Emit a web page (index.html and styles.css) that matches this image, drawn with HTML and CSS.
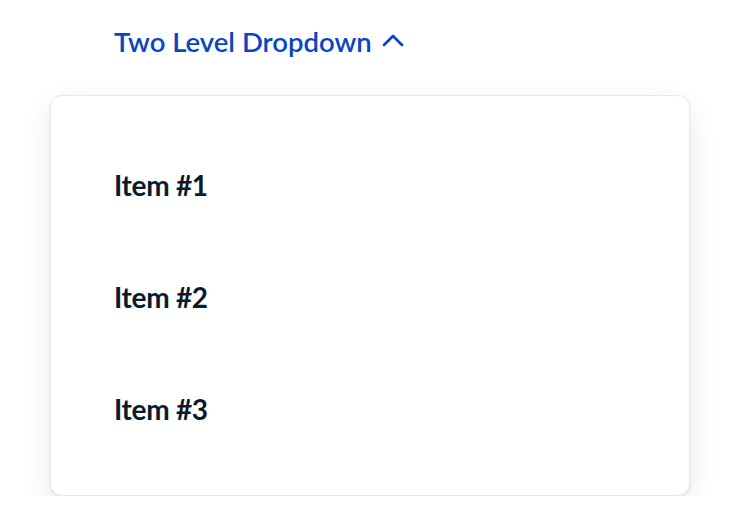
FILE: index.html
```html
<!DOCTYPE html>
<html>
<head>
<meta charset="utf-8">
<link rel="stylesheet" href="styles.css">
</head>
<body>
<div class="wrap">
  <button class="toggle">
    <span>Two Level Dropdown</span>
    <svg class="chev" width="22" height="14" viewBox="0 0 22 14"><path d="M2 12 L11 3 L20 12" fill="none" stroke="#0a45c4" stroke-width="2.8" stroke-linecap="round" stroke-linejoin="round"/></svg>
  </button>
  <ul class="menu">
    <li class="item">Item #1</li>
    <li class="item">Item #2</li>
    <li class="item">Item #3</li>
  </ul>
</div>
</body>
</html>
```
FILE: styles.css
```css
html, body { margin: 0; padding: 0; background: #fff; }
body { font-family: Lato, "Open Sans", sans-serif; }
.wrap { padding: 24px 48px 0 50px; width: 640px; }
.toggle {
  display: flex; align-items: center; gap: 10px;
  background: none; border: 0; padding: 0 0 0 64px; margin: 0;
  font-family: Lato, sans-serif; font-size: 27.5px; font-weight: 600;
  color: #0a45c4; height: 34px; cursor: pointer;
}
.chev { margin-top: -2px; }
.menu {
  list-style: none; margin: 37px 0 0 0; padding: 33px 0 46px 0;
  border: 1px solid #e8e8e8; border-radius: 12px;
  box-shadow: 0 1px 2px rgba(0,0,0,0.08), 0 12px 28px rgba(0,0,0,0.09);
  background: #fff;
}
.item {
  padding: 0 0 0 63px; height: 112px; line-height: 112px;
  font-size: 28px; font-weight: 700; color: #0b1a2b; letter-spacing: -0.3px;
}
.item:last-child { height: 96px; }
```
